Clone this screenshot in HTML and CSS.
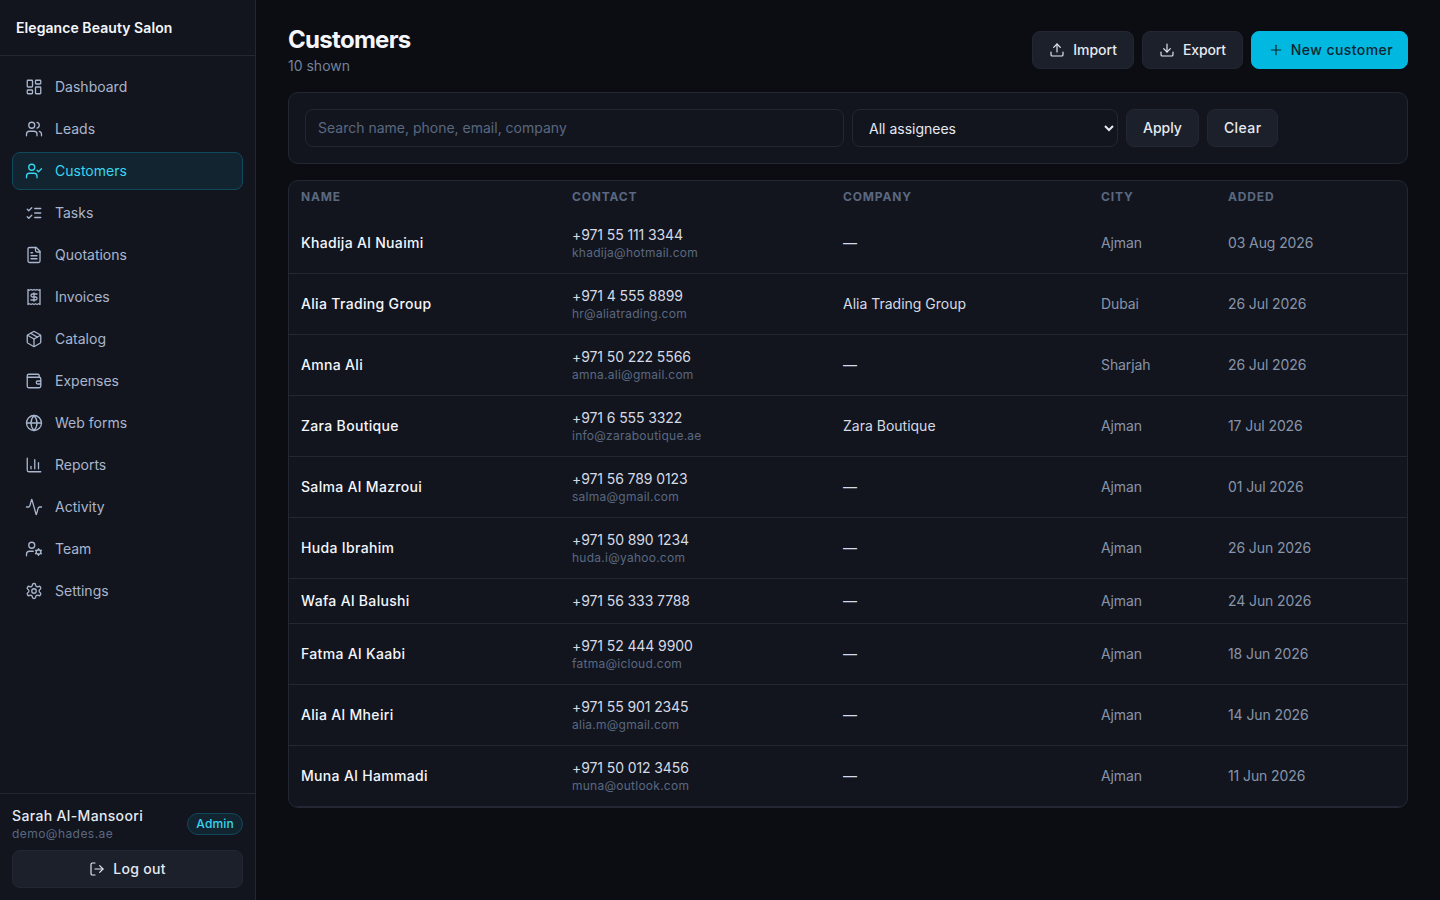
FILE: index.html
```html
<!DOCTYPE html>
<html>
  <head>
    <meta charset="utf-8">
    <title>Customers</title>
    <link rel="stylesheet" href="styles.css">
  </head>
  <body>
    <div class="shell">
      <aside class="sidebar">
        <div class="brand">Elegance Beauty Salon</div>
        <nav class="nav">
          <a class="nav-item"><svg class="icon" viewBox="0 0 24 24"><rect x="3" y="3" width="7" height="9" rx="1"/><rect x="14" y="3" width="7" height="5" rx="1"/><rect x="14" y="12" width="7" height="9" rx="1"/><rect x="3" y="16" width="7" height="5" rx="1"/></svg>Dashboard</a>
          <a class="nav-item"><svg class="icon" viewBox="0 0 24 24"><path d="M16 21v-2a4 4 0 0 0-4-4H6a4 4 0 0 0-4 4v2"/><circle cx="9" cy="7" r="4"/><path d="M22 21v-2a4 4 0 0 0-3-3.87"/><path d="M16 3.13a4 4 0 0 1 0 7.75"/></svg>Leads</a>
          <a class="nav-item active"><svg class="icon" viewBox="0 0 24 24"><path d="M16 21v-2a4 4 0 0 0-4-4H6a4 4 0 0 0-4 4v2"/><circle cx="9" cy="7" r="4"/><polyline points="16 11 18 13 22 9"/></svg>Customers</a>
          <a class="nav-item"><svg class="icon" viewBox="0 0 24 24"><path d="m3 17 2 2 4-4"/><path d="m3 7 2 2 4-4"/><path d="M13 6h8"/><path d="M13 12h8"/><path d="M13 18h8"/></svg>Tasks</a>
          <a class="nav-item"><svg class="icon" viewBox="0 0 24 24"><path d="M15 2H6a2 2 0 0 0-2 2v16a2 2 0 0 0 2 2h12a2 2 0 0 0 2-2V7Z"/><path d="M14 2v4a2 2 0 0 0 2 2h4"/><path d="M10 9H8"/><path d="M16 13H8"/><path d="M16 17H8"/></svg>Quotations</a>
          <a class="nav-item"><svg class="icon" viewBox="0 0 24 24"><path d="M4 2v20l2-1 2 1 2-1 2 1 2-1 2 1 2-1 2 1V2l-2 1-2-1-2 1-2-1-2 1-2-1-2 1Z"/><path d="M16 8h-6a2 2 0 1 0 0 4h4a2 2 0 1 1 0 4H8"/><path d="M12 17.5v-11"/></svg>Invoices</a>
          <a class="nav-item"><svg class="icon" viewBox="0 0 24 24"><path d="m7.5 4.27 9 5.15"/><path d="M21 8a2 2 0 0 0-1-1.73l-7-4a2 2 0 0 0-2 0l-7 4A2 2 0 0 0 3 8v8a2 2 0 0 0 1 1.73l7 4a2 2 0 0 0 2 0l7-4A2 2 0 0 0 21 16Z"/><path d="m3.3 7 8.7 5 8.7-5"/><path d="M12 22V12"/></svg>Catalog</a>
          <a class="nav-item"><svg class="icon" viewBox="0 0 24 24"><path d="M19 7V5a2 2 0 0 0-2-2H5a2 2 0 0 0-2 2v14a2 2 0 0 0 2 2h14a2 2 0 0 0 2-2v-3"/><path d="M3 7h16a2 2 0 0 1 2 2v3"/><path d="M21 12h-4a2 2 0 0 0 0 4h4Z"/></svg>Expenses</a>
          <a class="nav-item"><svg class="icon" viewBox="0 0 24 24"><circle cx="12" cy="12" r="10"/><path d="M12 2a14.5 14.5 0 0 0 0 20 14.5 14.5 0 0 0 0-20"/><path d="M2 12h20"/></svg>Web forms</a>
          <a class="nav-item"><svg class="icon" viewBox="0 0 24 24"><path d="M3 3v16a2 2 0 0 0 2 2h16"/><path d="M18 17V9"/><path d="M13 17V5"/><path d="M8 17v-3"/></svg>Reports</a>
          <a class="nav-item"><svg class="icon" viewBox="0 0 24 24"><path d="M22 12h-2.48a2 2 0 0 0-1.93 1.46l-2.35 8.36a.25.25 0 0 1-.48 0L9.24 2.18a.25.25 0 0 0-.48 0l-2.35 8.36A2 2 0 0 1 4.49 12H2"/></svg>Activity</a>
          <a class="nav-item"><svg class="icon" viewBox="0 0 24 24"><path d="M2 21v-2a4 4 0 0 1 4-4h5"/><circle cx="9" cy="7" r="4"/><circle cx="18" cy="16" r="3"/><path d="M18 11.5V13"/><path d="M18 19v1.5"/><path d="m14.1 13.75 1.3.75"/><path d="m20.6 17.5 1.3.75"/><path d="m14.1 18.25 1.3-.75"/><path d="m20.6 14.5 1.3-.75"/></svg>Team</a>
          <a class="nav-item"><svg class="icon" viewBox="0 0 24 24"><path d="M12.22 2h-.44a2 2 0 0 0-2 2v.18a2 2 0 0 1-1 1.73l-.43.25a2 2 0 0 1-2 0l-.15-.08a2 2 0 0 0-2.73.73l-.22.38a2 2 0 0 0 .73 2.73l.15.1a2 2 0 0 1 1 1.72v.51a2 2 0 0 1-1 1.74l-.15.09a2 2 0 0 0-.73 2.73l.22.38a2 2 0 0 0 2.73.73l.15-.08a2 2 0 0 1 2 0l.43.25a2 2 0 0 1 1 1.73V20a2 2 0 0 0 2 2h.44a2 2 0 0 0 2-2v-.18a2 2 0 0 1 1-1.73l.43-.25a2 2 0 0 1 2 0l.15.08a2 2 0 0 0 2.73-.73l.22-.39a2 2 0 0 0-.73-2.73l-.15-.08a2 2 0 0 1-1-1.74v-.5a2 2 0 0 1 1-1.74l.15-.09a2 2 0 0 0 .73-2.73l-.22-.38a2 2 0 0 0-2.73-.73l-.15.08a2 2 0 0 1-2 0l-.43-.25a2 2 0 0 1-1-1.73V4a2 2 0 0 0-2-2z"/><circle cx="12" cy="12" r="3"/></svg>Settings</a>
        </nav>
        <div class="user-box">
          <div class="user-row">
            <div class="user-info">
              <div class="user-name">Sarah Al-Mansoori</div>
              <div class="user-email">demo@hades.ae</div>
            </div>
            <span class="badge">Admin</span>
          </div>
          <button class="btn btn-wide"><svg class="icon icon-sm" viewBox="0 0 24 24"><path d="M9 21H5a2 2 0 0 1-2-2V5a2 2 0 0 1 2-2h4"/><polyline points="16 17 21 12 16 7"/><line x1="21" y1="12" x2="9" y2="12"/></svg>Log out</button>
        </div>
      </aside>

      <main class="main">
        <div class="page-head">
          <div>
            <h1>Customers</h1>
            <div class="sub">10 shown</div>
          </div>
          <div class="actions">
            <button class="btn"><svg class="icon icon-sm" viewBox="0 0 24 24"><path d="M21 15v4a2 2 0 0 1-2 2H5a2 2 0 0 1-2-2v-4"/><polyline points="17 8 12 3 7 8"/><line x1="12" y1="3" x2="12" y2="15"/></svg>Import</button>
            <button class="btn btn-export"><svg class="icon icon-sm" viewBox="0 0 24 24"><path d="M21 15v4a2 2 0 0 1-2 2H5a2 2 0 0 1-2-2v-4"/><polyline points="7 10 12 15 17 10"/><line x1="12" y1="15" x2="12" y2="3"/></svg>Export</button>
            <button class="btn btn-primary"><svg class="icon icon-sm" viewBox="0 0 24 24"><path d="M5 12h14"/><path d="M12 5v14"/></svg>New customer</button>
          </div>
        </div>

        <form class="filters">
          <input class="search" type="text" placeholder="Search name, phone, email, company">
          <select class="assignee"><option>All assignees</option></select>
          <button type="button" class="btn">Apply</button>
          <button type="button" class="btn btn-clear">Clear</button>
        </form>

        <div class="table-card">
          <table>
            <thead>
              <tr>
                <th class="col-name">Name</th>
                <th class="col-contact">Contact</th>
                <th class="col-company">Company</th>
                <th class="col-city">City</th>
                <th>Added</th>
              </tr>
            </thead>
            <tbody>
              <tr><td class="name">Khadija Al Nuaimi</td><td><div class="phone">+971 55 111 3344</div><div class="email">khadija@hotmail.com</div></td><td class="company">—</td><td class="muted">Ajman</td><td class="muted">03 Aug 2026</td></tr>
              <tr><td class="name">Alia Trading Group</td><td><div class="phone">+971 4 555 8899</div><div class="email">hr@aliatrading.com</div></td><td class="company">Alia Trading Group</td><td class="muted">Dubai</td><td class="muted">26 Jul 2026</td></tr>
              <tr><td class="name">Amna Ali</td><td><div class="phone">+971 50 222 5566</div><div class="email">amna.ali@gmail.com</div></td><td class="company">—</td><td class="muted">Sharjah</td><td class="muted">26 Jul 2026</td></tr>
              <tr><td class="name">Zara Boutique</td><td><div class="phone">+971 6 555 3322</div><div class="email">info@zaraboutique.ae</div></td><td class="company">Zara Boutique</td><td class="muted">Ajman</td><td class="muted">17 Jul 2026</td></tr>
              <tr><td class="name">Salma Al Mazroui</td><td><div class="phone">+971 56 789 0123</div><div class="email">salma@gmail.com</div></td><td class="company">—</td><td class="muted">Ajman</td><td class="muted">01 Jul 2026</td></tr>
              <tr><td class="name">Huda Ibrahim</td><td><div class="phone">+971 50 890 1234</div><div class="email">huda.i@yahoo.com</div></td><td class="company">—</td><td class="muted">Ajman</td><td class="muted">26 Jun 2026</td></tr>
              <tr><td class="name">Wafa Al Balushi</td><td><div class="phone">+971 56 333 7788</div></td><td class="company">—</td><td class="muted">Ajman</td><td class="muted">24 Jun 2026</td></tr>
              <tr><td class="name">Fatma Al Kaabi</td><td><div class="phone">+971 52 444 9900</div><div class="email">fatma@icloud.com</div></td><td class="company">—</td><td class="muted">Ajman</td><td class="muted">18 Jun 2026</td></tr>
              <tr><td class="name">Alia Al Mheiri</td><td><div class="phone">+971 55 901 2345</div><div class="email">alia.m@gmail.com</div></td><td class="company">—</td><td class="muted">Ajman</td><td class="muted">14 Jun 2026</td></tr>
              <tr><td class="name">Muna Al Hammadi</td><td><div class="phone">+971 50 012 3456</div><div class="email">muna@outlook.com</div></td><td class="company">—</td><td class="muted">Ajman</td><td class="muted">11 Jun 2026</td></tr>
            </tbody>
          </table>
        </div>
      </main>
    </div>
  </body>
</html>
```
FILE: styles.css
```css
* {
  box-sizing: border-box;
}

html, body {
  margin: 0;
  height: 100%;
}

body {
  background-color: #0b0d12;
  color: #e6e9f0;
  font-family: Inter, "Liberation Sans", sans-serif;
  font-size: 14px;
  line-height: 20px;
}

.shell {
  display: flex;
  height: 100%;
}

.icon {
  width: 18px;
  height: 18px;
  flex-shrink: 0;
  fill: none;
  stroke: currentColor;
  stroke-width: 1.75;
  stroke-linecap: round;
  stroke-linejoin: round;
}

.icon-sm {
  width: 16px;
  height: 16px;
}

/* sidebar */
.sidebar {
  width: 256px;
  flex-shrink: 0;
  display: flex;
  flex-direction: column;
  background-color: #12151e;
  border-right: 1px solid #232733;
}

.brand {
  height: 56px;
  padding: 0 16px;
  display: flex;
  align-items: center;
  font-weight: 600;
  letter-spacing: 0.07px;
  color: #f4f6fb;
  border-bottom: 1px solid #232733;
}

.nav {
  flex-grow: 1;
  padding: 12px;
  display: flex;
  flex-direction: column;
  gap: 4px;
}

.nav-item {
  height: 38px;
  padding: 0 12px;
  display: flex;
  align-items: center;
  gap: 12px;
  color: #a9b6cd;
  border: 1px solid transparent;
  border-radius: 8px;
}

.nav-item.active {
  color: #38d6f0;
  background-color: #122430;
  border-color: #0f4a5c;
}

.user-box {
  padding: 12px;
  display: flex;
  flex-direction: column;
  gap: 8px;
  border-top: 1px solid #232733;
}

.user-row {
  display: flex;
  align-items: center;
  justify-content: space-between;
}

.user-name {
  font-weight: 500;
  letter-spacing: 0.35px;
  color: #e6e9f0;
}

.user-email {
  font-size: 12px;
  line-height: 16px;
  letter-spacing: 0.45px;
  color: #5a6880;
}

.badge {
  padding: 0 8px;
  height: 22px;
  display: flex;
  align-items: center;
  font-size: 12px;
  font-weight: 500;
  letter-spacing: 0.2px;
  color: #38d6f0;
  background-color: #122430;
  border: 1px solid #0f4a5c;
  border-radius: 11px;
}

/* buttons */
.btn {
  height: 38px;
  padding: 0 16px;
  display: inline-flex;
  align-items: center;
  justify-content: center;
  gap: 8px;
  font-family: inherit;
  font-size: 14px;
  line-height: 20px;
  font-weight: 500;
  color: #e6e9f0;
  background-color: #1c202b;
  border: 1px solid #232733;
  border-radius: 8px;
}

.btn-wide {
  width: 100%;
  letter-spacing: 0.3px;
}

.btn-export {
  letter-spacing: -0.15px;
}

.btn-clear {
  letter-spacing: 0.4px;
}

.btn-primary {
  padding-right: 14px;
  gap: 7px;
  letter-spacing: 0.42px;
  color: #0b2530;
  background-color: #00b8e0;
  border-color: #00b8e0;
}

/* main */
.main {
  flex-grow: 1;
  padding: 24px 32px;
}

.page-head {
  height: 52px;
  margin-bottom: 16px;
  display: flex;
  align-items: center;
  justify-content: space-between;
}

h1 {
  margin: 0;
  font-size: 24px;
  line-height: 32px;
  font-weight: 700;
  letter-spacing: -0.7px;
  color: #f4f6fb;
}

.sub {
  color: #74829a;
}

.actions {
  display: flex;
  gap: 8px;
}

.filters {
  margin-bottom: 16px;
  padding: 16px;
  display: flex;
  gap: 8px;
  background-color: #12151e;
  border: 1px solid #232733;
  border-radius: 10px;
}

.search, .assignee {
  height: 38px;
  font-family: inherit;
  font-size: 14px;
  line-height: 20px;
  color: #e6e9f0;
  background-color: #12151e;
  border: 1px solid #232733;
  border-radius: 8px;
}

.search {
  width: 539px;
  padding: 0 12px 2px;
}

.search::placeholder {
  color: #5a6880;
}

.assignee {
  width: 266px;
  padding: 0 12px;
}

/* table */
.table-card {
  background-color: #12151e;
  border: 1px solid #232733;
  border-radius: 10px;
  overflow: hidden;
}

table {
  width: 100%;
  border-collapse: collapse;
  table-layout: fixed;
}

th {
  height: 32px;
  padding: 0 12px;
  text-align: left;
  font-size: 12px;
  font-weight: 700;
  letter-spacing: 0.07em;
  text-transform: uppercase;
  color: #5a6880;
}

.col-name, .col-contact {
  width: 271px;
}

.col-company {
  width: 258px;
}

.col-city {
  width: 127px;
}

td {
  padding: 12px;
  border-bottom: 1px solid #232733;
  color: #d5dae5;
}

.name {
  font-weight: 500;
  letter-spacing: 0.33px;
  color: #f4f6fb;
}

.phone {
  letter-spacing: -0.1px;
}

.email {
  font-size: 12px;
  line-height: 16px;
  letter-spacing: 0.25px;
  color: #5a6880;
}

.muted {
  letter-spacing: -0.1px;
  color: #8794aa;
}
```
